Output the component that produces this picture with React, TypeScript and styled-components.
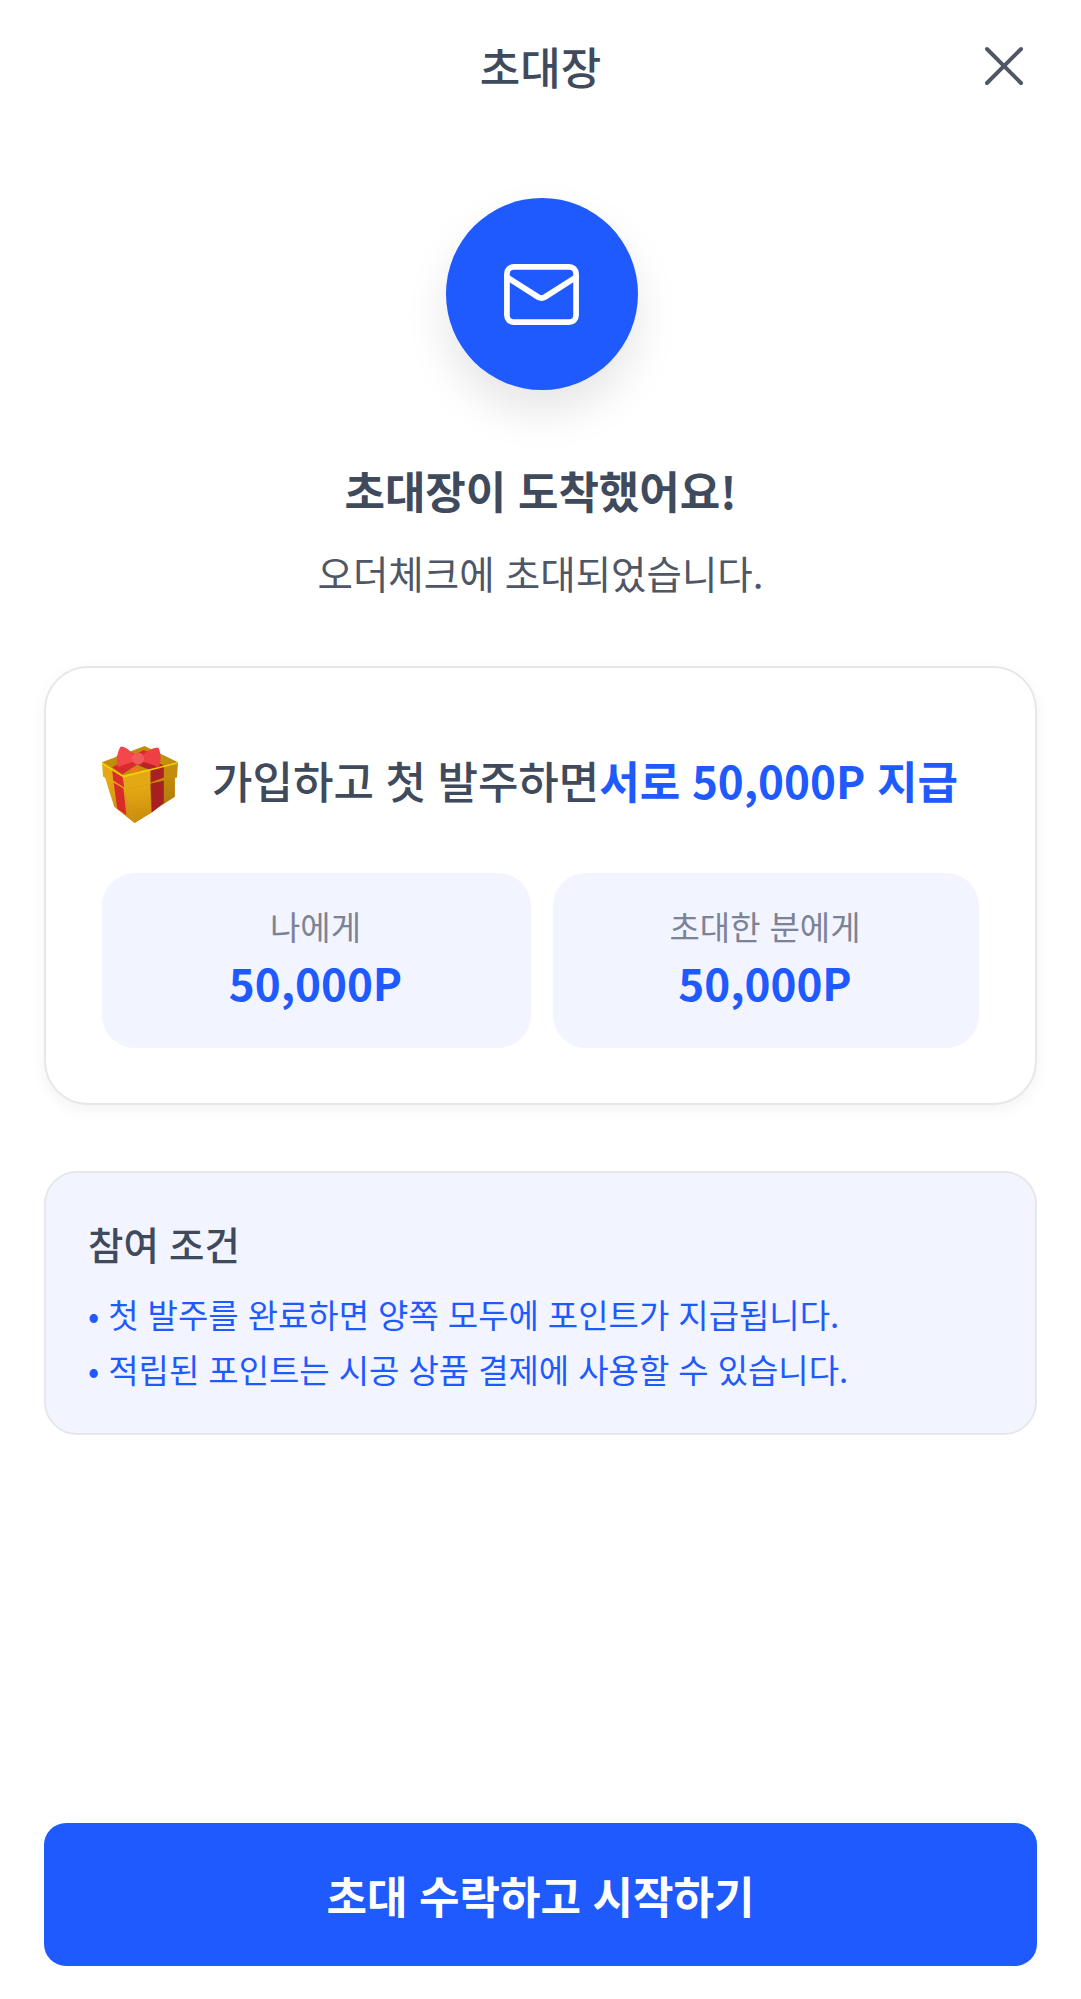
import React from "react";
import styled, { createGlobalStyle } from "styled-components";
import { X, Mail } from "lucide-react";

const Global = createGlobalStyle`
  html, body { margin: 0; padding: 0; background: #fff; }
  body {
    font-family: "Noto Sans CJK KR", "Noto Sans", sans-serif;
    color: #3f4a5c;
    word-spacing: 0.1em;
  }
`;

const Page = styled.div`
  width: 1081px;
  height: 1999px;
  box-sizing: border-box;
  padding: 0 44px 33px;
  display: flex;
  flex-direction: column;
  overflow: hidden;
`;

const Header = styled.header`
  height: 132px;
  margin-bottom: 66px;
  display: grid;
  grid-template-columns: 1fr auto 1fr;
  align-items: center;
`;

const Title = styled.h1`
  grid-column: 2;
  margin: 0;
  font-size: 44px;
  font-weight: 500;
  line-height: 1;
`;

const Close = styled.button`
  grid-column: 3;
  justify-self: end;
  width: 68px;
  height: 68px;
  margin-right: -1px;
  padding: 0;
  border: 0;
  background: none;
  color: #4f5666;
  display: flex;
  align-items: center;
  justify-content: center;
`;

const Circle = styled.div`
  align-self: center;
  width: 192px;
  height: 192px;
  margin-left: 2px;
  border-radius: 50%;
  background: #1f5aff;
  box-shadow: 0 22px 44px rgba(0, 0, 0, 0.1);
  color: #fff;
  display: flex;
  align-items: center;
  justify-content: center;
`;

const Heading = styled.h2`
  margin: 70px 0 0;
  text-align: center;
  font-size: 44px;
  line-height: 60px;
  font-weight: 700;
`;

const Sub = styled.p`
  margin: 26px 0 0;
  text-align: center;
  font-size: 38.5px;
  line-height: 52px;
  font-weight: 400;
  color: #4f5666;
`;

const RewardCard = styled.section`
  margin-top: 68px;
  box-sizing: border-box;
  border: 2.75px solid #e6e7e9;
  border-radius: 44px;
  padding: 55px 54px 55px 56px;
  background: #fff;
  box-shadow: 0 5px 16px rgba(0, 0, 0, 0.05);
`;

const RewardTitle = styled.div`
  height: 118px;
  margin-bottom: 32px;
  display: flex;
  align-items: center;
  gap: 34px;
  font-size: 44px;
  font-weight: 500;
  white-space: nowrap;
`;

const RewardText = styled.span`
  margin-top: -5px;
`;

const Accent = styled.strong`
  color: #1f5aff;
  font-weight: 700;
`;

const Pills = styled.div`
  display: grid;
  grid-template-columns: 429px 426px;
  gap: 22px;
`;

const Pill = styled.div`
  height: 175px;
  box-sizing: border-box;
  padding: 0 2px 8px 0;
  border-radius: 33px;
  background: #f2f5ff;
  display: flex;
  flex-direction: column;
  align-items: center;
  justify-content: center;
`;

const PillLabel = styled.div`
  font-size: 33px;
  line-height: 48px;
  color: #7c8397;
`;

const PillValue = styled.div`
  margin-top: 2px;
  font-size: 44px;
  line-height: 60px;
  font-weight: 700;
  color: #1f5aff;
`;

const Info = styled.section`
  margin-top: 66px;
  box-sizing: border-box;
  height: 264px;
  border: 2.75px solid #e6e7e9;
  border-radius: 33px;
  padding: 44px 42px;
  background: #f2f5ff;
`;

const InfoTitle = styled.h3`
  margin: 0 0 18px;
  font-size: 38.5px;
  line-height: 52px;
  font-weight: 500;
`;

const InfoLine = styled.p`
  margin: 0;
  font-size: 33px;
  line-height: 55px;
  color: #1f5aff;
  white-space: nowrap;
`;

const Cta = styled.button`
  margin-top: auto;
  height: 143px;
  border: 0;
  border-radius: 22px;
  background: #1f5aff;
  color: #fff;
  font-family: inherit;
  font-size: 44px;
  font-weight: 700;
  word-spacing: inherit;
`;

const Gift = () => (
  <svg width="76" height="77" viewBox="13 12 75 76" style={{ flex: "none", marginTop: 4 }}>
    <defs>
      <linearGradient id="gl" x1="0" y1="0" x2="0" y2="1">
        <stop offset="0" stopColor="#e8ac14" />
        <stop offset="1" stopColor="#c98a0c" />
      </linearGradient>
      <linearGradient id="gr" x1="0" y1="0" x2="0" y2="1">
        <stop offset="0" stopColor="#c48a0a" />
        <stop offset="1" stopColor="#a8740c" />
      </linearGradient>
    </defs>
    <polygon points="15,40 36,55 45,88 25,72" fill="url(#gl)" />
    <polygon points="36,55 85,40 85,62 45,88" fill="url(#gr)" />
    <polygon points="36,55 60,48 62,78 45,88" fill="url(#gl)" />
    <polygon points="24,44 34,52 37,80 28,74" fill="#d92a2a" />
    <polygon points="61,47 74,43 74,68 62,78" fill="#a81f22" />
    <polygon points="13,28 34,41 36,55 14,42" fill="#e3a915" />
    <polygon points="34,41 88,28 87,43 36,55" fill="#c48c0a" />
    <polygon points="34,41 60,35 61,49 36,55" fill="#e3a915" />
    <polygon points="23,34 33,40 35,53 24,46" fill="#df2c2c" />
    <polygon points="61,35 74,31 74,43 61,48" fill="#ab2024" />
    <polygon points="13,28 55,12 88,28 34,41" fill="#c08d0c" />
    <polygon points="23,33 33,40 64,20 54,16" fill="#d92a2c" />
    <polygon points="61,36 74,31 38,17 27,22" fill="#b92226" />
    <ellipse cx="46" cy="36" rx="5" ry="2.5" fill="#ee7a18" />
    <polygon points="13,28 34,41 88,28 87,29.5 34,43 13,30" fill="#f6d000" />
    <path d="M47 24C40 14 32 11 31 13C27 20 27 30 29 33C35 30 42 28 47 27Z" fill="#f4474b" />
    <path d="M50 24C56 18 64 12 69 14C72 22 71 28 69 33C62 30 56 28 50 27Z" fill="#ee4044" />
    <circle cx="48.5" cy="24.5" r="6" fill="#f4595a" />
  </svg>
);

export default function App() {
  return (
    <Page>
      <Global />
      <Header>
        <Title>초대장</Title>
        <Close aria-label="닫기">
          <X size={68} strokeWidth={1.4} />
        </Close>
      </Header>
      <Circle>
        <Mail size={83} strokeWidth={1.65} />
      </Circle>
      <Heading>초대장이 도착했어요!</Heading>
      <Sub>오더체크에 초대되었습니다.</Sub>
      <RewardCard>
        <RewardTitle>
          <Gift />
          <RewardText>
            가입하고 첫 발주하면<Accent>서로 50,000P 지급</Accent>
          </RewardText>
        </RewardTitle>
        <Pills>
          <Pill>
            <PillLabel>나에게</PillLabel>
            <PillValue>50,000P</PillValue>
          </Pill>
          <Pill>
            <PillLabel>초대한 분에게</PillLabel>
            <PillValue>50,000P</PillValue>
          </Pill>
        </Pills>
      </RewardCard>
      <Info>
        <InfoTitle>참여 조건</InfoTitle>
        <InfoLine>• 첫 발주를 완료하면 양쪽 모두에 포인트가 지급됩니다.</InfoLine>
        <InfoLine>• 적립된 포인트는 시공 상품 결제에 사용할 수 있습니다.</InfoLine>
      </Info>
      <Cta>초대 수락하고 시작하기</Cta>
    </Page>
  );
}
